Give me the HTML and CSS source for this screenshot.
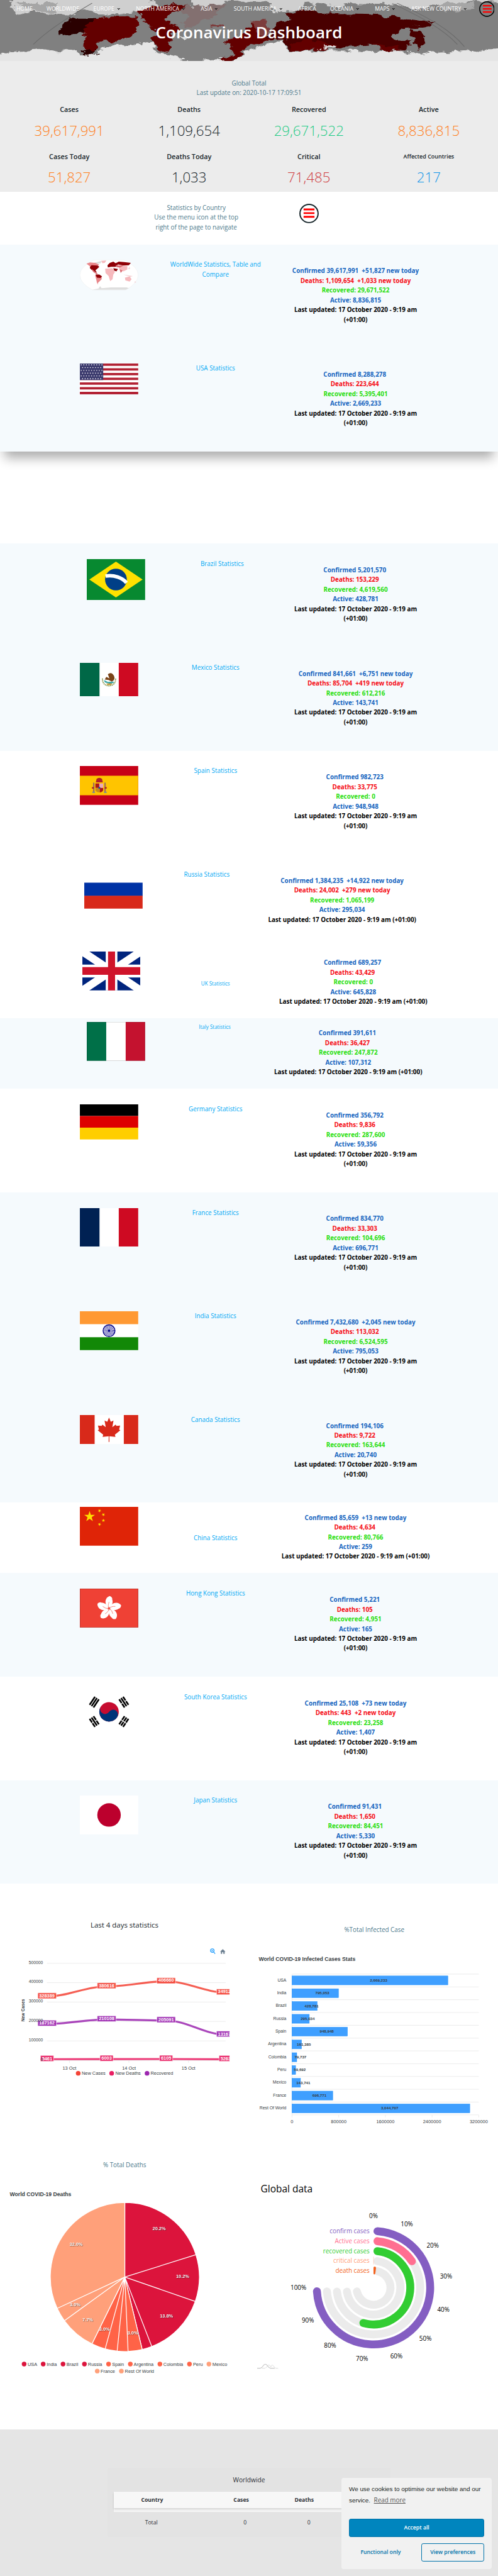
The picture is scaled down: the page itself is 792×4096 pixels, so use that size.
FILE: index.html
```html
<!DOCTYPE html>
<html lang="en">
<head>
<meta charset="utf-8">
<title>Coronavirus Dashboard</title>
<link rel="stylesheet" href="styles.css">
</head>
<body>
<div class="page">

<header class="hero">
  <svg class="hero-art" viewBox="0 0 1568 385" preserveAspectRatio="none">
    <defs>
      <filter id="rough" x="-5%" y="-5%" width="110%" height="110%">
        <feTurbulence type="fractalNoise" baseFrequency="0.035 0.03" numOctaves="4" seed="7" result="n"/>
        <feDisplacementMap in="SourceGraphic" in2="n" scale="46" xChannelSelector="R" yChannelSelector="G"/>
      </filter>
    </defs>
    <rect width="1568" height="385" fill="#808080"/>
    <g filter="url(#rough)">
      <path fill="#cfcfcf" d="M30-30H480L490 40 470 70 400 80 330 100 300 70 250 60 230 90 150 85 100 70 50 90 40 40zM600-30H1600V10H1480L1440 30 1380 20 1330 60 1240 30 1120 25 1060 40 960 15 940 60 860 80 850 20 700 5 690 40 600 60z"/>
      <path fill="#a6a6a6" d="M60 20H180L170 80 80 60zM1380 20H1500L1480 60 1400 70z"/>
      <path fill="#e5e5e5" d="M-30 350L50 325 130 312 175 325 220 312 250 345 290 345 320 325 320 300 350 290 430 275 480 262 490 330 530 345 580 375 610 390 690 370 740 400 765 330 800 305 870 265 890 250 905 322 1010 318 1270 322 1290 338 1400 330 1480 318 1600 300V420H-30z"/>
      <path fill="#2a0000" d="M178 215L205 140 240 118 300 118 262 202 200 222zM258 320L300 312 302 340 262 350z"/>
      <path fill="#640000" d="M258 202L296 125 350 105 430 100 438 150 430 205 400 240 350 262 300 265 300 318 265 318 268 232z"/>
      <path fill="#640000" d="M438 60L560 25 588 40 540 90 520 130 560 180 540 220 534 325 500 322 478 245 488 200 470 150 440 110z"/>
      <path fill="#837070" d="M575 150L590 90 560 60 600 35 715 30 680 90 640 130 600 180z"/>
      <path fill="#7d3c3c" d="M790 190L800 130 830 112 850 150 835 250 812 260zM668 152H698V170H668z"/>
      <path fill="#640000" d="M770 210L795 140 810 220 850 230 860 250 800 280 765 310 745 385H700L735 335 735 280 700 265z"/>
      <path fill="#480000" d="M848 205L880 130 905 135 905 80 960 60 1010 85 1100 85 1180 88 1260 115 1370 135 1350 172 1290 168 1240 215 1240 250 1290 255 1280 318 1190 280 1100 292 1000 305 910 318 890 240 840 250z"/>
      <path fill="#480000" d="M1300 170L1335 220 1325 310 1300 260z"/>
      <path fill="#640000" d="M910 318L930 270 985 252 1050 285 1030 310zM1180 270L1230 290 1275 318 1210 320z"/>
      <path fill="#e0e0e0" d="M1010 290H1050V304H1010zM560 225L590 240 570 250z"/>
    </g>
    <g fill="none" stroke="#6c6c6c" stroke-width="3">
      <path d="M290 20C230 90 150 190 105 280M1250 20C1350 110 1420 190 1462 294M1235 22C1330 110 1400 190 1440 280"/>
    </g>
  </svg>
  <nav class="nav">
    <a>HOME</a><a>WORLDWIDE</a><a class="sub">EUROPE</a><a class="sub">NORTH AMERICA</a><a class="sub">ASIA</a><a class="sub">SOUTH AMERICA</a><a>AFRICA</a><a class="sub">OCEANIA</a><a class="sub">MAPS</a><a class="sub">ASK NEW COUNTRY</a>
    <svg class="burger" viewBox="0 0 50 50"><circle cx="25" cy="25" r="23.3" fill="none" stroke="#000" stroke-width="3.2"/><path d="M12 14.500H40M12 24.500H40M12 34.500H40" stroke="red" stroke-width="4.600"/></svg>
  </nav>
  <h1>Coronavirus Dashboard</h1>
</header>

<section class="totals">
  <p>Global Total<br>Last update on: 2020-10-17 17:09:51</p>
  <div class="total-grid">
    <div><h4>Cases</h4><b class="orange">39,617,991</b></div>
    <div><h4>Deaths</h4><b>1,109,654</b></div>
    <div><h4>Recovered</h4><b class="green">29,671,522</b></div>
    <div><h4>Active</h4><b class="orange">8,836,815</b></div>
    <div><h4>Cases Today</h4><b class="orange">51,827</b></div>
    <div><h4>Deaths Today</h4><b>1,033</b></div>
    <div><h4>Critical</h4><b class="red">71,485</b></div>
    <div><h4 class="small">Affected Countries</h4><b class="blue">217</b></div>
  </div>
</section>

<section class="hint">
  <p>Statistics by Country<br>Use the menu icon at the top<br>right of the page to navigate</p>
  <svg class="burger-lg" viewBox="0 0 50 50"><circle cx="25" cy="25" r="23.3" fill="none" stroke="#17252a" stroke-width="3.200"/><path d="M11 14.500H39M11 24H39M11 33.500H39" stroke="red" stroke-width="4.600"/></svg>
</section>

<div class="lifted">
<section class="row tint">
  <svg class="flag" viewBox="0 0 150 78" height="78"><path d="M36 .5H114Q150 18 150 39T118 77.500H32Q0 60 0 39T36 .5z" fill="#fff" stroke="#e6eaec" stroke-width=".8"/>
    <path fill="#dedede" d="M32 77L48 74 52 68 56 73 80 71 120 71 126 73 118 77zM36 8L48 5 56 3 54 9 40 12z"/>
    <path fill="#e9868a" d="M17 10L26 7 40 8 50 13 40 18 26 17zM39 40L56 42 56 50 50 56 46 60 47 64 44 60 42 50z"/>
    <path fill="#8f0006" d="M26 18L30 14 46 15 50 18 44 24 40 27 44 33 36 30 30 26 26 22zM40 38L50 38 57 43 53 47 44 46zM77 8L86 5 92 9 100 5 115 6 131 8 126 14 112 15 98 12 92 18 80 18 72 20 71 14zM86 22L98 24 94 30 88 28z"/>
    <path fill="#f6b9bd" d="M55 3L68 2 64 8 58 9zM65 23L84 22 90 32 86 38 84 50 78 55 74 42 66 34zM98 16H122V25L112 30 102 24zM116 46L128 43 133 50 128 56 117 53z"/>
    <path fill="#dc6f75" d="M92 14L112 15 104 20 94 19zM30 23L38 30 46 36 44 38 34 31zM102 24L110 28 105 34z"/>
    <path fill="#f3d0d2" d="M112 38L124 40 136 42 130 44zM142 55L145 58 140 59zM124 24L128 18 129 24z"/></svg>
  <a>WorldWide Statistics, Table and Compare</a>
  <div class="stats"><p class="c">Confirmed 39,617,991&nbsp; +51,827 new today</p><p class="d">Deaths: 1,109,654&nbsp; +1,033 new today</p><p class="r">Recovered: 29,671,522</p><p class="c">Active: 8,836,815</p><p>Last updated: 17 October 2020 - 9:19 am (+01:00)</p></div>
</section>
<section class="row tint">
  <svg class="flag" viewBox="0 0 150 79" height="79"><path fill="#fff" d="M0 0h150v79H0z"/><path stroke="#b22234" stroke-width="6.080" d="M0 3.040H150M0 15.190H150M0 27.350H150M0 39.500H150M0 51.650H150M0 63.810H150M0 75.960H150"/><path fill="#3c3b6e" d="M0 0h60v42.500H0z"/><g stroke="#fff" stroke-width="2.600" stroke-linecap="round" stroke-dasharray="0 6.650"><path d="M3.500 3.500H58M3.500 17.700H58M3.500 31.900H58M7 10.600H55M7 24.800H55M7 39H55"/></g></svg>
  <a>USA Statistics</a>
  <div class="stats"><p class="c">Confirmed 8,288,278&nbsp;</p><p class="d">Deaths: 223,644&nbsp;</p><p class="r">Recovered: 5,395,401</p><p class="c">Active: 2,669,233</p><p>Last updated: 17 October 2020 - 9:19 am (+01:00)</p></div>
</section>
</div>

<section class="row tint brazil">
  <svg class="flag" viewBox="0 0 150 105" height="105"><path fill="#078930" d="M0 0h150v105H0z"/><path fill="#ffe100" d="M75 6.500L143.500 52.500 75 98.500 6.500 52.500z"/><circle cx="75" cy="52.500" r="28" fill="#003f87"/><path d="M48.300 43.500C70 40 92 48 102 61" fill="none" stroke="#fff" stroke-width="9"/></svg>
  <a>Brazil Statistics</a>
  <div class="stats"><p class="c">Confirmed 5,201,570&nbsp;</p><p class="d">Deaths: 153,229&nbsp;</p><p class="r">Recovered: 4,619,560</p><p class="c">Active: 428,781</p><p>Last updated: 17 October 2020 - 9:19 am (+01:00)</p></div>
</section>
<section class="row tint">
  <svg class="flag" viewBox="0 0 150 86" height="86"><path fill="#fff" d="M0 0h150v86H0z"/><path fill="#006847" d="M0 0h50.500v86H0z"/><path fill="#ce0a22" d="M100 0h50v86h-50z"/><path d="M58 40Q58 58 75 59Q92 58 92 40" fill="none" stroke="#8a9a52" stroke-width="3" stroke-dasharray="3 1.500"/><path fill="#7a4419" d="M72 29Q82 22 88 34Q92 44 82 48L74 44 64 43 68 36 76 40z"/><path fill="#3aa7a8" d="M62 44L72 49 86 48 88 51 78 54 64 50z"/><path fill="#c79b3a" d="M68 53H84L80 57H71z"/></svg>
  <a>Mexico Statistics</a>
  <div class="stats"><p class="c">Confirmed 841,661&nbsp; +6,751 new today</p><p class="d">Deaths: 85,704&nbsp; +419 new today</p><p class="r">Recovered: 612,216</p><p class="c">Active: 143,741</p><p>Last updated: 17 October 2020 - 9:19 am (+01:00)</p></div>
</section>
<section class="row">
  <svg class="flag" viewBox="0 0 150 100" height="100"><path fill="#c60117" d="M0 0h150v100H0z"/><path fill="#ffc400" d="M0 25h150v50H0z"/><path fill="#9a6b60" d="M34 43H37.500V69H34zM63 43H66.500V69H63z"/><path fill="#b0202a" d="M43 33Q50 28 57 33L59 42H41zM31 54H36V58H31zM64 54H69V58H64z"/><path fill="#ad1519" d="M40 45H50V56H40zM51 56H60V62Q58 68 51 68z"/><path fill="#eaa9b4" d="M50 45H60V56H50z"/><path fill="#c58a1b" d="M40 57H50V68Q42 68 40 62z"/><circle cx="50" cy="56" r="2.500" fill="#1a4fa0"/><path fill="#7a8a99" d="M32 66H39V69H32zM62 66H69V69H62z"/></svg>
  <a>Spain Statistics</a>
  <div class="stats"><p class="c">Confirmed 982,723&nbsp;</p><p class="d">Deaths: 33,775&nbsp;</p><p class="r">Recovered: 0</p><p class="c">Active: 948,948</p><p>Last updated: 17 October 2020 - 9:19 am (+01:00)</p></div>
</section>
<section class="row russia">
  <svg class="flag" viewBox="0 0 150 100" height="100"><path fill="#fff" d="M0 0h150v34H0z"/><path fill="#0032a5" d="M0 33.300h150v34H0z"/><path fill="#d8291a" d="M0 66.700h150v33.300H0z"/></svg>
  <a>Russia Statistics</a>
  <div class="stats"><p class="c">Confirmed 1,384,235&nbsp; +14,922 new today</p><p class="d">Deaths: 24,002&nbsp; +279 new today</p><p class="r">Recovered: 1,065,199</p><p class="c">Active: 295,034</p><p>Last updated: 17 October 2020 - 9:19 am (+01:00)</p></div>
</section>
<section class="row tight uk">
  <svg class="flag" viewBox="0 0 150 100" height="100"><path fill="#00247d" d="M0 0h150v100H0z"/><path stroke="#fff" stroke-width="20" d="M0 0L150 100M150 0L0 100"/><path stroke="#fff" stroke-width="33" d="M0 50H150"/><path stroke="#fff" stroke-width="30" d="M75 0V100"/><path stroke="#cf142b" stroke-width="20" d="M0 50H150"/><path stroke="#cf142b" stroke-width="18" d="M75 0V100"/></svg>
  <a class="lower">UK Statistics</a>
  <div class="stats"><p class="c">Confirmed 689,257&nbsp;</p><p class="d">Deaths: 43,429&nbsp;</p><p class="r">Recovered: 0</p><p class="c">Active: 645,828</p><p>Last updated: 17 October 2020 - 9:19 am (+01:00)</p></div>
</section>
<section class="row tight tint italy">
  <svg class="flag" viewBox="0 0 150 100" height="100"><path fill="#fff" d="M0 0h150v100H0z"/><path fill="#007048" d="M0 0h50v100H0z"/><path fill="#c4122f" d="M100 0h50v100h-50z"/><path d="M.5 .5H149.500V99.500H.5z" fill="none" stroke="#000" stroke-opacity=".25"/></svg>
  <a>Italy Statistics</a>
  <div class="stats"><p class="c">Confirmed 391,611&nbsp;</p><p class="d">Deaths: 36,427&nbsp;</p><p class="r">Recovered: 247,872</p><p class="c">Active: 107,312</p><p>Last updated: 17 October 2020 - 9:19 am (+01:00)</p></div>
</section>
<section class="row">
  <svg class="flag" viewBox="0 0 150 90" height="90"><path d="M0 0h150v30H0z"/><path fill="#d00" d="M0 30h150v30H0z"/><path fill="#ffce00" d="M0 60h150v30H0z"/></svg>
  <a>Germany Statistics</a>
  <div class="stats"><p class="c">Confirmed 356,792&nbsp;</p><p class="d">Deaths: 9,836&nbsp;</p><p class="r">Recovered: 287,600</p><p class="c">Active: 59,356</p><p>Last updated: 17 October 2020 - 9:19 am (+01:00)</p></div>
</section>
<section class="row tint">
  <svg class="flag" viewBox="0 0 150 100" height="100"><path fill="#fff" d="M0 0h150v100H0z"/><path fill="#002153" d="M0 0h50.500v100H0z"/><path fill="#ce0a22" d="M100 0h50v100h-50z"/></svg>
  <a>France Statistics</a>
  <div class="stats"><p class="c">Confirmed 834,770&nbsp;</p><p class="d">Deaths: 33,303&nbsp;</p><p class="r">Recovered: 104,696</p><p class="c">Active: 696,771</p><p>Last updated: 17 October 2020 - 9:19 am (+01:00)</p></div>
</section>
<section class="row tint">
  <svg class="flag" viewBox="0 0 150 100" height="100"><path fill="#fff" d="M0 0h150v100H0z"/><path fill="#f93" d="M0 0h150v33.300H0z"/><path fill="#128807" d="M0 66.700h150v33.300H0z"/><circle cx="75" cy="50" r="15.300" fill="none" stroke="#000088" stroke-width="2.200"/><circle cx="75" cy="50" r="7.500" fill="none" stroke="#000088" stroke-width="14" stroke-dasharray=".9 1.063" opacity=".85"/><circle cx="75" cy="50" r="3" fill="#000088"/></svg>
  <a>India Statistics</a>
  <div class="stats"><p class="c">Confirmed 7,432,680&nbsp; +2,045 new today</p><p class="d">Deaths: 113,032&nbsp;</p><p class="r">Recovered: 6,524,595</p><p class="c">Active: 795,053</p><p>Last updated: 17 October 2020 - 9:19 am (+01:00)</p></div>
</section>
<section class="row tint">
  <svg class="flag" viewBox="0 0 150 75" height="75"><path fill="#fff" d="M0 0h150v75H0z"/><path fill="#d8291a" d="M0 0h38v75H0zM113 0h37v75h-37zM75 6.500L79.500 17.500 86.500 14 83.500 31 92 24.500 94 28 103.500 27 101 37 104 39 90 50.500 91.500 56 75.800 54.500 76 69H74L74.200 54.500 58.500 56 60 50.500 46 39 49 37 46.500 27 56 28 58 24.500 66.500 31 63.500 14 70.500 17.500z"/></svg>
  <a>Canada Statistics</a>
  <div class="stats"><p class="c">Confirmed 194,106&nbsp;</p><p class="d">Deaths: 9,722&nbsp;</p><p class="r">Recovered: 163,644</p><p class="c">Active: 20,740</p><p>Last updated: 17 October 2020 - 9:19 am (+01:00)</p></div>
</section>
<section class="row tight">
  <svg class="flag" viewBox="0 0 150 100" height="100"><defs><path id="st" d="M0-1L.2245-.309 .951-.309 .363 .118 .588 .809 0 .382-.588 .809-.363 .118-.951-.309-.2245-.309z"/></defs><path fill="#df2407" d="M0 0h150v100H0z"/><g fill="#ffde00"><use href="#st" transform="translate(25 25) scale(14.500)"/><use href="#st" transform="translate(50.500 10) rotate(24) scale(4.800)"/><use href="#st" transform="translate(60.500 20) rotate(44) scale(4.800)"/><use href="#st" transform="translate(60.500 35) scale(4.800)"/><use href="#st" transform="translate(50.500 45) rotate(24) scale(4.800)"/></g></svg>
  <a class="lower">China Statistics</a>
  <div class="stats wide"><p class="c">Confirmed 85,659&nbsp; +13 new today</p><p class="d">Deaths: 4,634&nbsp;</p><p class="r">Recovered: 80,766</p><p class="c">Active: 259</p><p>Last updated: 17 October 2020 - 9:19 am (+01:00)</p></div>
</section>
<section class="row tint">
  <svg class="flag" viewBox="0 0 150 100" height="100"><defs><path id="pt" d="M0-2C-13-9-12-28 2-32C7-30 9-26 8-24C11-16 8-6 0-2z"/></defs><path fill="#ef4135" d="M0 0h150v100H0z"/><path d="M.5 .5H149.500V99.500H.5z" fill="none" stroke="#a52a22"/><g fill="#fff" transform="translate(75 51)"><use href="#pt"/><use href="#pt" transform="rotate(72)"/><use href="#pt" transform="rotate(144)"/><use href="#pt" transform="rotate(216)"/><use href="#pt" transform="rotate(288)"/></g><g fill="none" stroke="#ef4135" stroke-width=".9" transform="translate(75 51)"><path d="M0 0Q-4-8 0-17"/><path d="M0 0Q-4-8 0-17" transform="rotate(72)"/><path d="M0 0Q-4-8 0-17" transform="rotate(144)"/><path d="M0 0Q-4-8 0-17" transform="rotate(216)"/><path d="M0 0Q-4-8 0-17" transform="rotate(288)"/></g></svg>
  <a>Hong Kong Statistics</a>
  <div class="stats"><p class="c">Confirmed 5,221&nbsp;</p><p class="d">Deaths: 105&nbsp;</p><p class="r">Recovered: 4,951</p><p class="c">Active: 165</p><p>Last updated: 17 October 2020 - 9:19 am (+01:00)</p></div>
</section>
<section class="row">
  <svg class="flag" viewBox="0 0 150 100" height="100"><path fill="#fff" d="M0 0h150v100H0z"/><g transform="rotate(33.700 75 50)"><circle cx="75" cy="50" r="25" fill="#c60c30"/><path fill="#003478" d="M50 50A12.500 12.500 0 0 0 75 50A12.500 12.500 0 0 1 100 50A25 25 0 0 1 50 50z"/></g><g stroke="#000" stroke-width="4.200"><path d="M-12.500-6H12.500M-12.500 0H12.500M-12.500 6H12.500" transform="translate(37 25) rotate(-56.300)"/><path d="M-12.500-6H-1M1-6H12.500M-12.500 0H12.500M-12.500 6H-1M1 6H12.500" transform="translate(37 75) rotate(56.300)"/><path d="M-12.500-6H-1M1-6H12.500M-12.500 0H12.500M-12.500 6H-1M1 6H12.500" transform="translate(113 25) rotate(56.300)"/><path d="M-12.500-6H-1M1-6H12.500M-12.500 0H-1M1 0H12.500M-12.500 6H-1M1 6H12.500" transform="translate(113 75) rotate(-56.300)"/></g></svg>
  <a>South Korea Statistics</a>
  <div class="stats"><p class="c">Confirmed 25,108&nbsp; +73 new today</p><p class="d">Deaths: 443&nbsp; +2 new today</p><p class="r">Recovered: 23,258</p><p class="c">Active: 1,407</p><p>Last updated: 17 October 2020 - 9:19 am (+01:00)</p></div>
</section>
<section class="row tint">
  <svg class="flag" viewBox="0 0 150 100" height="100"><path fill="#fff" d="M0 0h150v100H0z"/><circle cx="75" cy="50" r="30.200" fill="#bc002d"/></svg>
  <a>Japan Statistics</a>
  <div class="stats"><p class="c">Confirmed 91,431&nbsp;</p><p class="d">Deaths: 1,650&nbsp;</p><p class="r">Recovered: 84,451</p><p class="c">Active: 5,330</p><p>Last updated: 17 October 2020 - 9:19 am (+01:00)</p></div>
</section>

<section class="charts">
  <svg class="chart" viewBox="0 0 640 620">
    <defs><clipPath id="plot"><rect x="90" y="100" width="500" height="320"/></clipPath></defs>
    <text class="dark mid" x="320" y="45.500" font-size="18.500">Last 4 days statistics</text>
    <g fill="none" stroke="#008ffb" stroke-width="1.700"><circle cx="545.700" cy="112.500" r="4.500"/><path d="M549 116L553 120.500"/><path d="M543.500 112.500H548M545.700 110.300V114.800" stroke-width="1"/></g>
    <path fill="#6e8192" d="M572.600 108.500L579.500 115H577.500V121H574V116.500H571V121H567.700V115H565.700z"/>
    <path stroke="#e0e0e0" d="M120.500 145H580M120.500 194.700H580M120.500 244.600H580M120.500 294.500H580M120.500 344.400H580M120.500 395H580M178.400 395V401M331.400 395V401M484.500 395V401"/>
    <g clip-path="url(#plot)">
      <g fill="none" stroke-width="5" opacity=".85">
        <path stroke="#f44336" d="M121 230.400C174.500 230.400 220.500 204.400 274 204.400S373.500 191.400 427 191.400 526.500 220.100 580 220.100"/>
        <path stroke="#e91e63" d="M121 391.600L274 391.300 427 391.200 580 391.700"/>
        <path stroke="#9c27b0" d="M121 300.900C174.500 300.900 220.500 289.500 274 289.500S373.500 292 427 292 526.500 328.600 580 328.600"/>
      </g>
      <g stroke="#fff" stroke-width="1" fill-opacity=".9">
        <g fill="#f44336"><rect x="97" y="221" width="48" height="15" rx="1.500"/><rect x="250" y="195" width="48" height="15" rx="1.500"/><rect x="403" y="182.300" width="48" height="15" rx="1.500"/><rect x="556.500" y="211" width="48" height="15" rx="1.500"/></g>
        <g fill="#e91e63"><rect x="104" y="382" width="34" height="15" rx="1.500"/><rect x="257" y="381.500" width="34" height="15" rx="1.500"/><rect x="410" y="381.500" width="34" height="15" rx="1.500"/><rect x="563" y="382" width="34" height="15" rx="1.500"/></g>
        <g fill="#9c27b0"><rect x="97" y="291.300" width="48" height="15" rx="1.500"/><rect x="250" y="280" width="48" height="15" rx="1.500"/><rect x="403" y="282.500" width="48" height="15" rx="1.500"/><rect x="556.500" y="319" width="48" height="15" rx="1.500"/></g>
      </g>
      <g class="arial mid" font-size="12" font-weight="700" fill="#fff"><text x="120.500" y="229">328389</text><text x="274" y="202.500">380616</text><text x="427" y="189">406660</text><text x="580" y="218">349120</text><text x="120.500" y="298.800">187162</text><text x="274" y="287.300">210108</text><text x="427" y="290">205091</text><text x="580" y="327">131670</text><text x="121" y="390">5461</text><text x="274" y="389">6003</text><text x="427" y="389">6105</text><text x="580" y="390">5263</text></g>
    </g>
    <g class="arial end" font-size="11"><text x="110.500" y="142.300">500000</text><text x="110.500" y="192.200">400000</text><text x="110.500" y="242.200">300000</text><text x="110.500" y="292.200">200000</text><text x="110.500" y="342.200">100000</text><text x="110.500" y="392.200">0</text></g>
    <text class="arial mid" font-size="11" font-weight="700" transform="translate(59 265.700) rotate(-90)">New Cases</text>
    <g class="arial mid" font-size="12"><text x="178.400" y="415">13 Oct</text><text x="331.400" y="415">14 Oct</text><text x="484.500" y="415">15 Oct</text></g>
    <circle cx="201" cy="427.700" r="6" fill="#f44336"/><circle cx="287" cy="427.700" r="6" fill="#e91e63"/><circle cx="378" cy="427.700" r="6" fill="#9c27b0"/>
    <g class="arial" font-size="12"><text x="210" y="428">New Cases</text><text x="296.500" y="428">New Deaths</text><text x="387" y="428">Recovered</text></g>
  </svg>

  <svg class="chart" viewBox="0 0 640 620">
    <text class="slate mid" x="322" y="58" font-size="16">%Total Infected Case</text>
    <text class="arial" x="25" y="134.300" font-size="14" font-weight="700">World COVID-19 Infected Cases Stats</text>
    <path stroke="#e0e0e0" d="M110.600 172.800H590.600M110.600 205.700H590.600M110.600 238.600H590.600M110.600 271.500H590.600M110.600 304.400H590.600M110.600 337.300H590.600M110.600 370.200H590.600M110.600 403.100H590.600M110.600 436H590.600M110.600 468.800H590.600M110.600 501.700H590.600M110.600 534.600H590.600M110.600 173V541M230.600 535V541M350.600 535V541M470.600 535V541M590.600 535V541"/>
    <g fill="#3f9fff" stroke="#2292fb" stroke-width=".8"><rect x="110.300" y="177.500" width="400.800" height="23"/><rect x="110.300" y="210.400" width="119.700" height="23"/><rect x="110.300" y="243.300" width="64.800" height="23"/><rect x="110.300" y="276.200" width="44.700" height="23"/><rect x="110.300" y="309.100" width="142.800" height="23"/><rect x="110.300" y="342" width="24.700" height="23"/><rect x="110.300" y="374.900" width="12.500" height="23"/><rect x="110.300" y="407.800" width="9.500" height="23"/><rect x="110.300" y="440.700" width="22.100" height="23"/><rect x="110.300" y="473.500" width="105" height="23"/><rect x="110.300" y="506.400" width="457.200" height="23"/></g>
    <g class="arial end" font-size="11"><text x="96" y="187.500">USA</text><text x="96" y="220.400">India</text><text x="96" y="253.300">Brazil</text><text x="96" y="286.200">Russia</text><text x="96" y="319.100">Spain</text><text x="96" y="352">Argentina</text><text x="96" y="384.900">Colombia</text><text x="96" y="417.800">Peru</text><text x="96" y="450.700">Mexico</text><text x="96" y="483.600">France</text><text x="96" y="516.500">Rest Of World</text></g>
    <g class="arial" font-size="10" font-weight="700"><text x="311" y="188.500">2,669,233</text><text x="170.500" y="221.400">795,053</text><text x="142.800" y="254.300">428,781</text><text x="132.800" y="286.500">295,034</text><text x="181.800" y="319.500">948,948</text><text x="122.900" y="352.400">161,385</text><text x="117" y="385.300">79,737</text><text x="115.300" y="418.200">59,692</text><text x="121.500" y="451.100">143,741</text><text x="163" y="484.300">696,771</text><text x="339.200" y="516.700">3,044,707</text></g>
    <g class="arial mid" font-size="12"><text x="110.600" y="552">0</text><text x="230.600" y="552">800000</text><text x="350.600" y="552">1600000</text><text x="470.600" y="552">2400000</text><text x="590.600" y="552">3200000</text></g>
  </svg>

  <svg class="chart tall" viewBox="0 0 640 724">
    <text class="slate mid" x="320.400" y="44" font-size="16">% Total Deaths</text>
    <text class="arial" x="25" y="119.300" font-size="14" font-weight="700">World COVID-19 Deaths</text>
    <g transform="translate(320.800 332.300)" stroke="#fff" stroke-width="2">
      <path fill="#dc143c" d="M0 0V-191.500A191.500 191.500 0 0 1 182.700-57.300zM0 0L182.700-57.300A191.500 191.500 0 0 1 181 62.700zM0 0L181 62.700A191.500 191.500 0 0 1 69.300 178.500zM0 0L69.300 178.500A191.500 191.500 0 0 1 44.700 186.200z"/>
      <path fill="#ff6347" d="M0 0L44.700 186.200A191.500 191.500 0 0 1 8.400 191.300zM0 0L8.400 191.300A191.500 191.500 0 0 1-19.700 190.500zM0 0L-19.700 190.500A191.500 191.500 0 0 1-50.500 184.700zM0 0L-50.500 184.700A191.500 191.500 0 0 1-84.500 171.800z"/>
      <path fill="#ffa07a" d="M0 0L-84.500 171.800A191.500 191.500 0 0 1-155.200 112.200zM0 0L-155.200 112.200A191.500 191.500 0 0 1-173.700 80.600zM0 0L-173.700 80.600A191.500 191.500 0 0 1 0-191.500z"/>
    </g>
    <g class="arial mid pct" font-size="12" font-weight="700"><text x="409" y="207.800">20.2%</text><text x="469.400" y="330">10.2%</text><text x="427.800" y="432">13.8%</text><text x="341.200" y="476">3.0%</text><text x="268.600" y="466.800">3.0%</text><text x="225.300" y="442">7.7%</text><text x="193" y="404">3.0%</text><text x="195.500" y="247.700">32.0%</text></g>
    <g fill="#dc143c"><circle cx="62" cy="556" r="6"/><circle cx="111" cy="556" r="6"/><circle cx="162" cy="556" r="6"/><circle cx="217" cy="556" r="6"/></g>
    <g fill="#ff6347"><circle cx="279" cy="556" r="6"/><circle cx="335" cy="556" r="6"/><circle cx="411" cy="556" r="6"/><circle cx="487" cy="556" r="6"/></g>
    <g fill="#ffa07a"><circle cx="537" cy="556" r="6"/><circle cx="250" cy="574" r="6"/><circle cx="312" cy="574" r="6"/></g>
    <g class="arial" font-size="12"><text x="71" y="556">USA</text><text x="120" y="556">India</text><text x="171" y="556">Brazil</text><text x="226" y="556">Russia</text><text x="288" y="556">Spain</text><text x="343.500" y="556">Argentina</text><text x="420" y="556">Colombia</text><text x="496" y="556">Peru</text><text x="546" y="556">Mexico</text><text x="258.500" y="574">France</text><text x="321" y="574">Rest Of World</text></g>
  </svg>

  <svg class="chart tall" viewBox="0 0 640 724">
    <text x="30" y="104.500" font-size="25">Global data</text>
    <g fill="none" stroke-width="20.300" stroke-linecap="round" transform="translate(320 359.800)">
      <g stroke="#ebebeb">
        <circle r="120" pathLength="360" stroke-dasharray="260.300 720" transform="rotate(-85.150)"/>
        <circle r="94.500" pathLength="360" stroke-dasharray="257.700 720" transform="rotate(-83.850)"/>
        <circle r="69" pathLength="360" stroke-dasharray="253.100 720" transform="rotate(-81.570)"/>
        <circle r="43.700" pathLength="360" stroke-dasharray="243.200 720" transform="rotate(-76.600)"/>
      </g>
      <circle r="145.700" pathLength="360" stroke="#845ec2" stroke-dasharray="262 720" transform="rotate(-86)"/>
      <circle r="120" pathLength="360" stroke="#ff6f91" stroke-dasharray="50.500 720" transform="rotate(-85.150)"/>
      <circle r="94.500" pathLength="360" stroke="#32cd32" stroke-dasharray="189.900 720" transform="rotate(-83.850)"/>
    </g>
    <path d="M320.300 280V300" stroke="#ffa07a" stroke-width=".7"/>
    <path fill="#f26522" d="M320 308.500Q320 305.500 323 305.500Q326.700 305.500 326.500 309L324.700 323Q324.300 325.700 322 325.700T320 323z"/>
    <g class="end" font-size="16"><text x="310" y="213.300" fill="#845ec2">confirm cases</text><text x="310" y="239.200" fill="#ff6f91">Active cases</text><text x="310" y="264.500" fill="#32cd32">recovered cases</text><text x="310" y="289.400" fill="#ffa07a">critical cases</text><text x="310" y="315.100" fill="#f26522">death cases</text></g>
    <g class="mid" font-size="16"><text x="320" y="175">0%</text><text x="405.700" y="195">10%</text><text x="472.200" y="251">20%</text><text x="506.500" y="330">30%</text><text x="499.600" y="416">40%</text><text x="453.500" y="489">50%</text><text x="378.800" y="534.200">60%</text><text x="290.600" y="541">70%</text><text x="208.600" y="508">80%</text><text x="151.400" y="443">90%</text><text x="127" y="359">100%</text></g>
    <g fill="none" stroke-width="1.700"><path stroke="#e3e3e3" d="M33 566.700H40C46 566.700 47 558.500 51 558.500S54 563 56 563 57 558.500 60 558.500 65 566.700 69 566.700H75"/><path stroke="#c6c6c6" d="M21 566.700H29C35 566.700 36 556.300 42 556.300S49 566.700 55 566.700H66"/></g>
  </svg>
</section>

<section class="world">
  <div class="card">
    <h3>Worldwide</h3>
    <div class="thead"><span>Country</span><span>Cases</span><span>Deaths</span></div>
    <div class="tbody"><span>Total</span><span>0</span><span>0</span></div>
  </div>
</section>

<aside class="cookie">
  <p>We use cookies to optimise our website and our</p>
  <p class="more"><span>service.</span><a>Read more</a></p>
  <button class="accept">Accept all</button>
  <div class="pair"><button class="plain">Functional only</button><button class="prefs">View preferences</button></div>
</aside>

</div>
</body>
</html>
```
FILE: styles.css
```css
html, body { margin: 0; background: #e5e5e5; overflow: hidden; }
* { box-sizing: border-box; }
p, h1, h3, h4 { margin: 0; }

.page {
  zoom: 0.61875;
  position: relative;
  width: 1280px;
  height: 6620px;
  overflow: hidden;
  background: #fff;
  font: 400 16px/25px "Open Sans", "Noto Sans", sans-serif;
  color: #4d7a8c;
}

/* header */
.hero { position: relative; height: 157px; overflow: hidden; color: #fff; }
.hero-art { position: absolute; inset: 0; width: 100%; height: 100%; }
.nav { position: relative; display: flex; height: 46px; padding: 3px 9px 0 42px; font-size: 14px; line-height: 40px; white-space: nowrap; }
.nav a { margin-right: 36px; }
.nav .sub::after {
  content: "";
  display: inline-block;
  width: 4px; height: 4px;
  margin: 0 6px 3px 8px;
  border: solid #111; border-width: 0 2px 2px 0;
  transform: rotate(45deg);
}
.burger { width: 40px; height: 40px; margin-left: auto; flex: none; }
.nav a:last-of-type { margin-right: 0; }
.hero h1 { position: relative; margin-top: 9px; text-align: center; font-size: 42px; line-height: 58px; font-weight: 600; }

/* totals */
.totals { height: 336px; padding-top: 45px; background: #ececec; text-align: center; }
.total-grid { display: grid; grid-template-columns: repeat(4, 308px); grid-auto-rows: 120px; justify-content: center; margin-top: 17px; color: #17252a; }
.total-grid h4 { font-size: 17.500px; font-weight: 600; line-height: 27px; }
.total-grid h4.small { font-size: 14.500px; }
.total-grid b { display: block; margin-top: 17px; font-size: 36px; line-height: 44px; font-weight: 300; }
.total-grid .orange { color: #ff7e1a; }
.total-grid .green { color: #1ecb84; }
.total-grid .red { color: #cf3b3f; }
.total-grid .blue { color: #1095e8; }

/* hint */
.hint { display: flex; align-items: flex-start; height: 135px; padding: 30px 0 0 364px; text-align: center; }
.hint p { width: 281px; margin-top: -1px; }
.burger-lg { width: 50px; height: 50px; margin-left: 124px; }

/* country rows */
.row { display: grid; grid-template-columns: 206px 150px 73px 250px 65px 340px; align-items: start; height: 266px; padding-top: 40px; text-align: center; background: #fff; }
.row.tint { background: #f5fafd; }
.row.tight { height: 181px; padding-top: 10px; }
.row .flag { grid-column: 2; width: 150px; display: block; }
.row a { grid-column: 4; color: #03a9f4; font-size: 16px; }
.row .stats { grid-column: 6; margin-top: 16px; font-weight: 700; color: #000; }
.row .c { color: #1565c0; }
.row .d { color: #f50a14; }
.row .r { color: #2adf10; }
.row .wide { margin-left: -30px; margin-right: -30px; }
.row .lower { margin-top: 69px; }
.row.brazil { grid-template-columns: 223px 150px 73px 250px 48px 340px; }
.row.russia { grid-template-columns: 217px 150px 39.500px 250px 23px 400px; height: 241px; }
.row.uk { grid-template-columns: 211px 150px 68px 250px 29px 400px; }
.row.italy { grid-template-columns: 223px 150px 54px 250px 18px 400px; }
.row.uk a, .row.italy a { font-size: 13px; }
.lifted { position: relative; margin-bottom: 237px; box-shadow: 0 28px 28px -12px rgba(0, 0, 0, .33); }

/* charts */
.charts { display: grid; grid-template-columns: 640px 640px; padding-top: 59px; background: #fff; }
.chart { display: block; width: 640px; height: 620px; }
.chart.tall { height: 724px; }
.chart text { fill: #000; dominant-baseline: central; }
.chart .dark { fill: #17252a; }
.chart .slate { fill: #4d7a8c; }
.chart .arial, .chart .arial text { font-family: "Liberation Sans", Arial, sans-serif; fill: #373d3f; }
.chart [fill] text { fill: inherit; }
.chart text[fill="#845ec2"] { fill: #845ec2; }
.chart text[fill="#ff6f91"] { fill: #ff6f91; }
.chart text[fill="#32cd32"] { fill: #32cd32; }
.chart text[fill="#ffa07a"] { fill: #ffa07a; }
.chart text[fill="#f26522"] { fill: #f26522; }
.chart g.arial[fill="#fff"] text, .chart g.pct text { fill: #fff; }
.chart g.pct { filter: drop-shadow(1px 1px 1px rgba(0, 0, 0, .55)); }
.mid { text-anchor: middle; }
.end { text-anchor: end; }

/* worldwide table */
.world { height: 376px; padding-top: 98px; background: #e5e5e5; color: #2c2f36; }
.card { width: 726px; height: 178px; margin-left: 277px; padding: 20px 16px 0; border-radius: 4px; background: #e3e3e3; }
.card h3 { text-align: center; font-size: 16.500px; font-weight: 400; line-height: 25px; }
.thead, .tbody { display: grid; grid-template-columns: 196px 262px 62px; font-size: 14px; text-align: center; line-height: 43px; }
.thead { height: 43px; margin-top: 16px; background: #f7f7f7; font-weight: 700; position: relative; box-shadow: 0 3px 5px rgba(0, 0, 0, .14), 0 10px 0 #f5f5f5; }
.tbody { grid-template-columns: 192px 290px 38px; margin-top: 15px; }

/* cookie notice */
.cookie { position: absolute; left: 878px; top: 6367px; width: 386px; height: 235px; padding: 16px 19px 0; border-radius: 6px; background: #f1f1f1; color: #191e23; }
.cookie p { font: 16px/28px "Liberation Sans", Arial, sans-serif; white-space: nowrap; }
.cookie .more { display: flex; gap: 9px; height: 61px; }
.cookie a { font-family: "Open Sans", sans-serif; color: #555; text-decoration: underline; }
.cookie button { height: 48px; padding: 0; border: 2px solid #0073aa; border-radius: 5px; background: none; font: 600 14px "Open Sans", sans-serif; color: #0073aa; }
.cookie .accept { width: 100%; background: #0085be; color: #fff; }
.pair { display: flex; justify-content: space-between; margin-top: 15px; }
.cookie .plain { width: 163px; border-color: transparent; }
.cookie .prefs { width: 162px; }
```
